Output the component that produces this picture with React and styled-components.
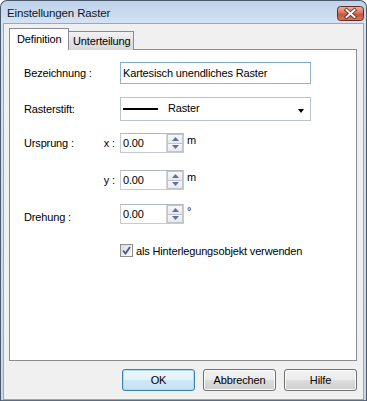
import styled, { createGlobalStyle } from "styled-components";

const GlobalStyle = createGlobalStyle`
  html, body {
    margin: 0;
    padding: 0;
    background: #ffffff;
  }
  * {
    box-sizing: border-box;
  }
`;

// DIALOG FRAME
const Window = styled.div`
  width: 367px;
  height: 401px;
  border: 1px solid #4a5a6b;
  border-bottom-color: #5d6d80;
  border-radius: 7px 7px 0 0;
  background: linear-gradient(#bed2ea 0px, #d4e2f3 22px, #c6d8ee 100%);
  padding: 0 2px;
  display: flex;
  flex-direction: column;
  font-family: "Liberation Sans", Arial, sans-serif;
  font-size: 11px;
  letter-spacing: -0.15px;
  color: #000;
`;

const TitleBar = styled.div`
  height: 22px;
  flex: none;
  display: flex;
  align-items: center;
  justify-content: space-between;
  padding: 0 0 0 4px;
`;

const Title = styled.span`
  font-size: 11.5px;
  color: #101820;
  margin-top: 1px;
`;

const CloseButton = styled.div`
  width: 27px;
  height: 15px;
  display: flex;
  margin-top: 2px;
`;

const Client = styled.div`
  flex: 1;
  background: #f0f0f0;
  border: 1px solid #8fa9c9;
  padding: 4px 6px 8px 5px;
  display: flex;
  flex-direction: column;
`;

// TABS
const Tabs = styled.div`
  height: 22px;
  display: flex;
  align-items: flex-end;
  margin-bottom: -1px;
`;

const Tab = styled.div`
  position: relative;
  z-index: ${({ $active }) => ($active ? 2 : 1)};
  height: ${({ $active }) => ($active ? "22px" : "19px")};
  width: ${({ $active }) => ($active ? "60px" : "66px")};
  margin-left: ${({ $active }) => ($active ? "0" : "-1px")};
  border: 1px solid #898c95;
  border-bottom: none;
  background: ${({ $active }) =>
    $active ? "#ffffff" : "linear-gradient(#f3f3f3, #e3e3e3 50%, #d9d9d9)"};
  padding: ${({ $active }) => ($active ? "3px 0 0 7px" : "2px 0 0 4px")};
  line-height: 14px;
  white-space: nowrap;
`;

const Panel = styled.div`
  height: 312px;
  flex: none;
  border: 1px solid #898c95;
  background: #ffffff;
  padding: 12px 0 0 14px;
  display: flex;
  flex-direction: column;
`;

// FORM ROWS
const Row = styled.div`
  display: grid;
  grid-template-columns: 79px 17px auto;
  align-items: center;
  margin-top: ${({ $top }) => $top || 0}px;
`;

const Label = styled.span`
  white-space: nowrap;
  padding-top: ${({ $drop }) => ($drop ? "6px" : "0")};
`;

const Axis = styled.span`
  text-align: right;
  padding-right: 5px;
  white-space: nowrap;
`;

const Control = styled.div`
  grid-column: 3;
  display: flex;
  align-items: center;
`;

const TextField = styled.input`
  width: 191px;
  height: 22px;
  border: 1px solid #8eb3d6;
  border-top-color: #7fa6cf;
  padding: 0 0 0 2px;
  margin: 0;
  font-family: inherit;
  font-size: 11px;
  letter-spacing: inherit;
  color: #000;
  background: #fff;
  outline: none;
`;

const Combo = styled.div`
  width: 191px;
  height: 24px;
  border: 1px solid #bcc2ca;
  background: #fff;
  display: flex;
  align-items: center;
  padding: 0 6px 0 2px;
`;

const PenLine = styled.span`
  width: 35px;
  height: 2px;
  background: #000;
  margin-right: 10px;
`;

const ComboText = styled.span`
  flex: 1;
  margin-top: -2px;
`;

const DropArrow = styled.span`
  width: 0;
  height: 0;
  border-left: 3.5px solid transparent;
  border-right: 3.5px solid transparent;
  border-top: 4px solid #000;
  margin-top: 3px;
`;

const SpinBox = styled.div`
  width: 64px;
  height: 20px;
  border: 1px solid #c6cad0;
  border-top-color: #b3b8bf;
  background: #fff;
  display: flex;
`;

const SpinValue = styled.input`
  flex: 1;
  min-width: 0;
  border: none;
  margin: 0;
  padding: 0 0 0 2px;
  font-family: inherit;
  font-size: 11px;
  letter-spacing: inherit;
  color: #000;
  background: transparent;
  outline: none;
`;

const SpinButtons = styled.div`
  width: 17px;
  display: flex;
  flex-direction: column;
  border-left: 1px solid #d3d6da;
`;

const SpinButton = styled.div`
  flex: 1;
  border: 1px solid #c0c4ca;
  border-top: ${({ $down }) => ($down ? "none" : "1px solid #c0c4ca")};
  background: linear-gradient(#f7f7f7, #e9e9e9);
  display: flex;
  align-items: center;
  justify-content: center;
`;

const Unit = styled.span`
  align-self: flex-start;
  line-height: 13px;
  margin: 1px 0 0 3px;
`;

const CheckWrap = styled.label`
  grid-column: 3;
  display: flex;
  align-items: center;
  gap: 3px;
  white-space: nowrap;
`;

const CheckBox = styled.span`
  width: 13px;
  height: 13px;
  border: 1px solid #8e8f8f;
  background: linear-gradient(135deg, #dcdcdc, #fbfbfb);
  display: flex;
  align-items: center;
  justify-content: center;
`;

// BUTTONS
const ButtonRow = styled.div`
  display: flex;
  justify-content: flex-end;
  gap: 8px;
  margin-top: 8px;
`;

const Button = styled.button`
  width: 73px;
  height: 22px;
  margin: 0;
  padding: 0;
  border: 1px solid ${({ $default }) => ($default ? "#3c7fb1" : "#707070")};
  border-radius: 3px;
  background: ${({ $default }) =>
    $default
      ? "linear-gradient(#eef7fc, #e2f1fa 50%, #d0e8f6 50%, #c6e2f3)"
      : "linear-gradient(#f2f2f2, #ebebeb 50%, #dddddd 50%, #cfcfcf)"};
  box-shadow: inset 0 0 0 1px
    ${({ $default }) => ($default ? "#a9dcf7" : "#fcfcfc")};
  font-family: inherit;
  font-size: 11px;
  letter-spacing: inherit;
  color: #000;
`;

const Arrow = ({ down }) => (
  <svg width="7" height="4" viewBox="0 0 7 4">
    <path
      d={down ? "M0 0 L7 0 L3.5 4 Z" : "M0 4 L7 4 L3.5 0 Z"}
      fill="#5b73a3"
    />
  </svg>
);

const Spinner = ({ unit }) => (
  <Control>
    <SpinBox>
      <SpinValue readOnly value="0.00" />
      <SpinButtons>
        <SpinButton>
          <Arrow />
        </SpinButton>
        <SpinButton $down>
          <Arrow down />
        </SpinButton>
      </SpinButtons>
    </SpinBox>
    <Unit>{unit}</Unit>
  </Control>
);

export default function App() {
  return (
    <>
      <GlobalStyle />
      <Window>
        <TitleBar>
          <Title>Einstellungen Raster</Title>
          <CloseButton>
            <svg width="27" height="15" viewBox="0 0 27 15">
              <defs>
                <linearGradient id="closeRed" x1="0" y1="0" x2="0" y2="1">
                  <stop offset="0" stopColor="#eab2a4" />
                  <stop offset="0.45" stopColor="#d9775f" />
                  <stop offset="0.55" stopColor="#c8553a" />
                  <stop offset="1" stopColor="#d07a5e" />
                </linearGradient>
              </defs>
              <rect
                x="0.5"
                y="0.5"
                width="26"
                height="14"
                rx="3"
                fill="url(#closeRed)"
                stroke="#6b2b1f"
              />
              <path
                d="M9.5 4 L17.5 11 M17.5 4 L9.5 11"
                stroke="#5a2419"
                strokeWidth="3.6"
                strokeLinecap="square"
              />
              <path
                d="M9.5 4 L17.5 11 M17.5 4 L9.5 11"
                stroke="#ffffff"
                strokeWidth="2"
                strokeLinecap="square"
              />
            </svg>
          </CloseButton>
        </TitleBar>
        <Client>
          <Tabs>
            <Tab $active>Definition</Tab>
            <Tab>Unterteilung</Tab>
          </Tabs>
          <Panel>
            <Row>
              <Label>Bezeichnung :</Label>
              <span />
              <Control>
                <TextField readOnly value="Kartesisch unendliches Raster" />
              </Control>
            </Row>
            <Row $top={13}>
              <Label>Rasterstift:</Label>
              <span />
              <Control>
                <Combo>
                  <PenLine />
                  <ComboText>Raster</ComboText>
                  <DropArrow />
                </Combo>
              </Control>
            </Row>
            <Row $top={12}>
              <Label>Ursprung :</Label>
              <Axis>x :</Axis>
              <Spinner unit="m" />
            </Row>
            <Row $top={17}>
              <span />
              <Axis>y :</Axis>
              <Spinner unit="m" />
            </Row>
            <Row $top={14}>
              <Label $drop>Drehung :</Label>
              <span />
              <Spinner unit="°" />
            </Row>
            <Row $top={20}>
              <CheckWrap>
                <CheckBox>
                  <svg width="9" height="9" viewBox="0 0 9 9">
                    <path
                      d="M1 4.5 L3.5 7.5 L8 1"
                      fill="none"
                      stroke="#3f5797"
                      strokeWidth="1.8"
                    />
                  </svg>
                </CheckBox>
                als Hinterlegungsobjekt verwenden
              </CheckWrap>
            </Row>
          </Panel>
          <ButtonRow>
            <Button $default>OK</Button>
            <Button>Abbrechen</Button>
            <Button>Hilfe</Button>
          </ButtonRow>
        </Client>
      </Window>
    </>
  );
}
